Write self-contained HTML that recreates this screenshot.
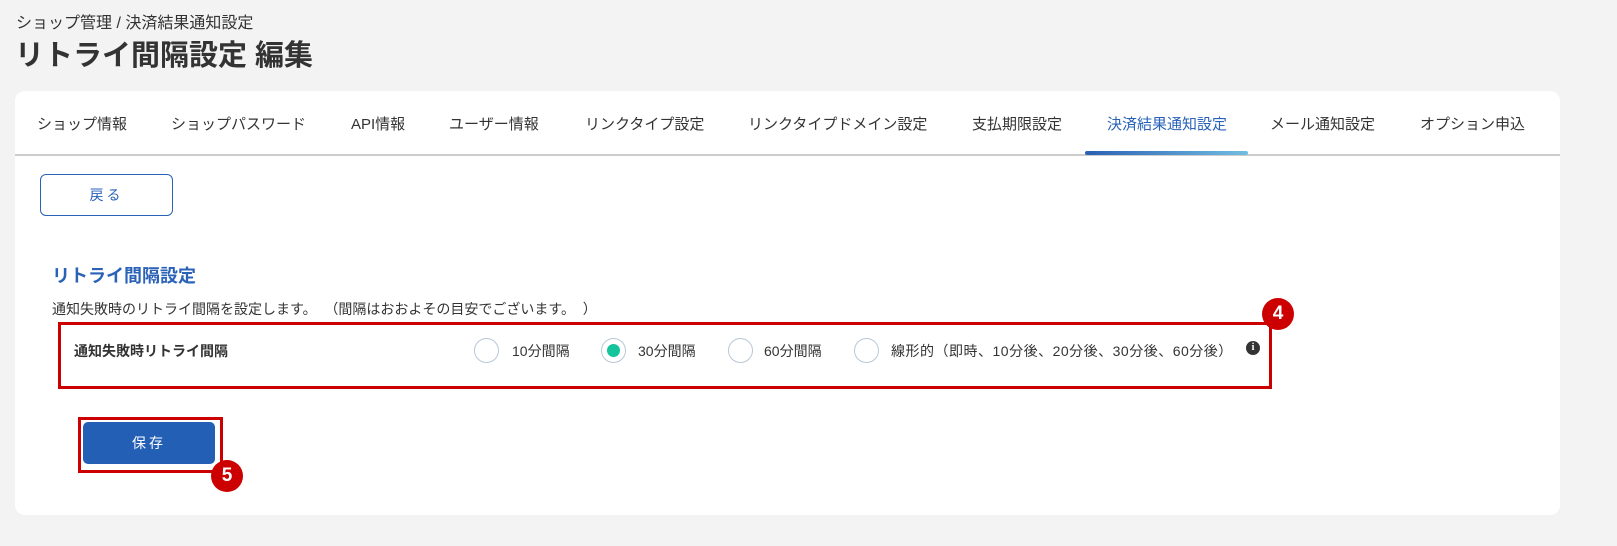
<!DOCTYPE html>
<html><head><meta charset="utf-8"><style>
*{margin:0;padding:0;box-sizing:border-box}
body{width:1617px;height:546px;background:#f3f3f3;font-family:"Liberation Sans","Noto Sans CJK JP",sans-serif;color:#333;position:relative;overflow:hidden}
.a{position:absolute;white-space:nowrap}
.card{position:absolute;left:15px;top:91px;width:1545px;height:424px;background:#fff;border-radius:10px}
.tab{position:absolute;top:113px;font-size:15px;color:#333}
.rad{position:absolute;top:338px;width:25px;height:25px;border:1px solid #b8c8d8;border-radius:50%;background:#fff}
.rt{position:absolute;top:341px;font-size:14px;color:#333}
.badge{position:absolute;width:32px;height:32px;border-radius:50%;background:#c00;color:#fff;font-weight:bold;font-size:19px;text-align:center;line-height:32px}
</style></head><body>
<div class="a" style="left:16px;top:9px;font-size:16px;color:#333">ショップ管理 / 決済結果通知設定</div>
<div class="a" style="left:15px;top:32px;font-size:29px;font-weight:bold;color:#333">リトライ間隔設定 編集</div>
<div class="card"></div>
<div class="a" style="left:15px;top:154px;width:1545px;height:2px;background:#ccc"></div>
<div class="a" style="left:1085px;top:151px;width:163px;height:4px;border-radius:2px;background:linear-gradient(90deg,#2a5fb5,#72bde0)"></div>
<div class="tab" style="left:37px">ショップ情報</div>
<div class="tab" style="left:171px">ショップパスワード</div>
<div class="tab" style="left:351px">API情報</div>
<div class="tab" style="left:449px">ユーザー情報</div>
<div class="tab" style="left:585px">リンクタイプ設定</div>
<div class="tab" style="left:748px">リンクタイプドメイン設定</div>
<div class="tab" style="left:972px">支払期限設定</div>
<div class="tab" style="left:1107px;color:#2a62b8">決済結果通知設定</div>
<div class="tab" style="left:1270px">メール通知設定</div>
<div class="tab" style="left:1420px">オプション申込</div>
<div class="a" style="left:40px;top:174px;width:133px;height:42px;border:1px solid #2a62b8;border-radius:6px;color:#2a62b8;font-size:14px;text-align:center;line-height:40px;letter-spacing:3px">戻る</div>
<div class="a" style="left:52px;top:262px;font-size:18px;font-weight:bold;color:#2a62b8">リトライ間隔設定</div>
<div class="a" style="left:52px;top:299px;font-size:14px;color:#333">通知失敗時のリトライ間隔を設定します。&nbsp;&nbsp;（間隔はおおよその目安でございます。&nbsp;&nbsp;）</div>
<div class="a" style="left:58px;top:322px;width:1214px;height:67px;border:3px solid #c00"></div>
<div class="badge" style="left:1262px;top:298px">4</div>
<div class="a" style="left:74px;top:341px;font-size:14px;font-weight:bold;color:#333">通知失敗時リトライ間隔</div>
<div class="rad" style="left:474px"></div><div class="rt" style="left:512px">10分間隔</div>
<div class="rad" style="left:601px"><div style="position:absolute;left:5px;top:5px;width:13px;height:13px;border-radius:50%;background:#14c49a"></div></div><div class="rt" style="left:638px">30分間隔</div>
<div class="rad" style="left:728px"></div><div class="rt" style="left:764px">60分間隔</div>
<div class="rad" style="left:854px"></div><div class="rt" style="left:891px;letter-spacing:0.5px">線形的（即時、10分後、20分後、30分後、60分後）</div>
<div class="a" style="left:1246px;top:341px;width:14px;height:14px;border-radius:50%;background:#333;color:#fff;font-size:10px;font-weight:bold;text-align:center;line-height:14px;font-family:'Liberation Serif',serif">i</div>
<div class="a" style="left:78px;top:417px;width:145px;height:56px;border:3px solid #c00"></div>
<div class="a" style="left:83px;top:422px;width:132px;height:42px;background:#2360b5;border-radius:5px;color:#fff;font-size:14px;text-align:center;line-height:42px;letter-spacing:3px">保存</div>
<div class="badge" style="left:211px;top:460px">5</div>
</body></html>
